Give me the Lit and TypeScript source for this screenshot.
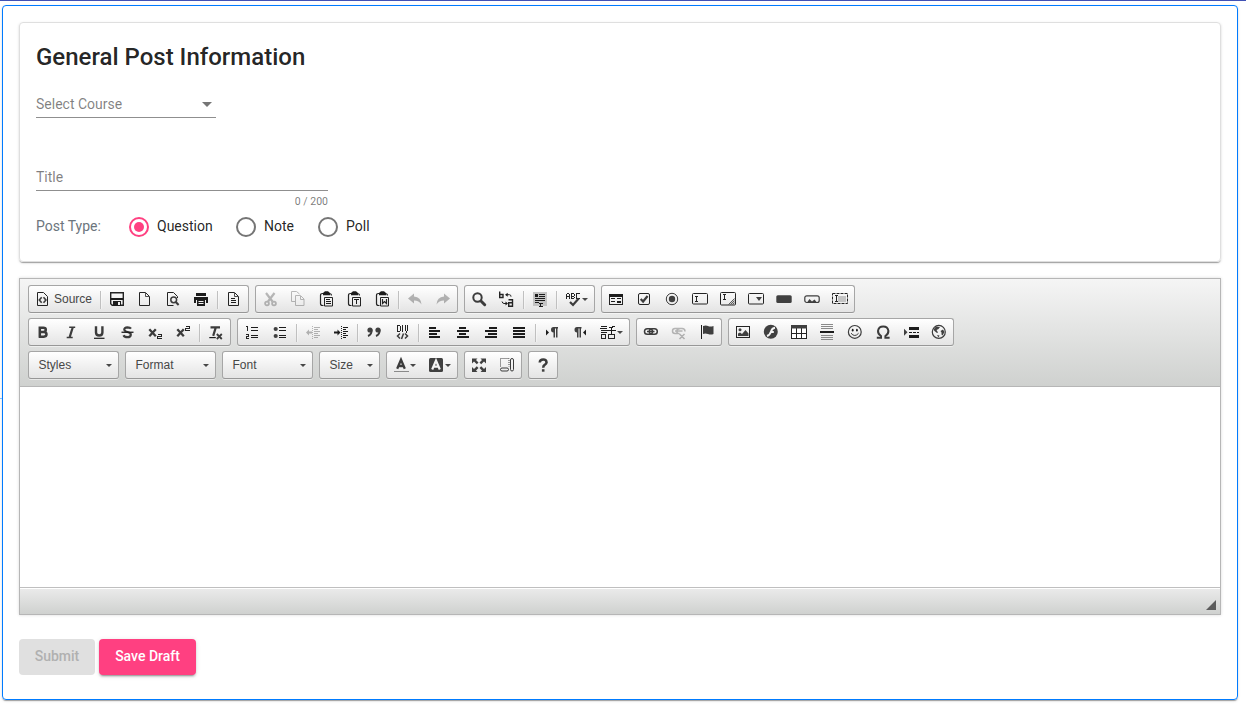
import { LitElement, html, css, svg, TemplateResult } from "lit";
import { customElement, property } from "lit/decorators.js";
import { classMap } from "lit/directives/class-map.js";

const page = svg`<path class="l" d="M2.5 1.5h6l4 4v9h-10z"/><path class="l thin" d="M8.5 2v3.5H12"/>`;
const clip = svg`<path class="l" stroke-width="1.200" d="M5.5 2.500h-1q-2 0-2 2v8q0 2 2 2h1M11 2.500q2.500 0 2.500 2"/><path d="M5 2l2-1.700h3L12 2v2.300H5z"/><path class="l" d="M6.500 6.500h8v8.500h-8z"/>`;
const lines = (rows: number[][]) => rows.map(([x, y, w, h]) => svg`<path class="px" d=${`M${x} ${y}h${w}v${h}h${-w}z`}/>`);

const ICONS: Record<string, unknown> = {
  source: svg`<path class="l" d="M2.500 1.500h6l4 4v9h-10z"/><path class="l mid" stroke-width="1.600" d="M6.700 6.300L4.300 9l2.400 2.700M8.500 6.300L10.900 9l-2.400 2.700"/>`,
  save: svg`<path class="l" stroke-width="1.400" d="M1.700 1.700h12.600v12.600H3.200l-1.500-1.500z"/><path d="M2 7h12v2H2zM4 10h8v5H4z"/><path class="lt" d="M9 11h2v3H9z"/>`,
  newpage: page,
  preview: svg`<path class="l" d="M12.500 7V5.500l-4-4h-6v13h6"/><circle class="l mid" stroke-width="1.500" cx="8.700" cy="8.800" r="2.900"/><path class="l mid" stroke-width="2" d="M10.800 11l2.800 3"/>`,
  print: svg`<path d="M3 2h10v3H3zM1 6h14v6h-2V9H3v3H1z"/><path d="M4 9h8v6H4z"/><path class="w" d="M5.500 10.500h5M5.500 12.500h5"/>`,
  templates: svg`${page}${lines([[5, 7, 4, 1], [5, 9, 5, 1], [5, 11, 5, 1]])}`,
  cut: svg`<path class="l" stroke-width="2.200" d="M4 2l6.500 8.500M12.500 2L6 10.500"/><circle class="l" stroke-width="1.800" cx="5" cy="12.500" r="1.900"/><circle class="l" stroke-width="1.800" cx="12" cy="12.500" r="1.900"/>`,
  copy: svg`<path class="l" d="M5 10.500H1.500v-10h5L9.500 3"/><path class="l" d="M5.500 4.500h5l3.500 3.500v6.500H5.500zM10.500 5v3.500H14"/>`,
  paste: svg`${clip}${lines([[8, 8, 4, 1], [8, 10, 5, 1], [8, 12, 5, 1]])}`,
  pastetext: svg`${clip}${lines([[8, 8, 5, 1], [10, 8, 1, 5]])}`,
  pasteword: svg`${clip}<path class="l" stroke-width="1.200" d="M8.500 8v4.500l2-2 2 2V8"/>`,
  undo: svg`<path d="M1 7.500L7 2.500v3q7 .5 7.500 8Q12 9.500 7 9.500v3z"/>`,
  redo: svg`<path d="M15 7.500L9 2.500v3Q2 6 1.500 13.500 4 9.500 9 9.500v3z"/>`,
  find: svg`<circle class="l mid" stroke-width="2" cx="6.500" cy="6.500" r="4.200"/><path class="l mid" stroke-width="3" stroke-linecap="round" d="M10.200 10.200l3.500 3.500"/>`,
  replace: svg`<path class="l" stroke-width="1.400" d="M.7.500v6h3.300v-3H1M9.500 8.700h4v6.600H9.700v-3.600h4"/><path class="l" d="M8 3.700h2.500q1.500 0 1.500 2M7 12.500H5q-1.500 0-2-2"/><path d="M6 3.700L8.700 1.700v4zM9 12.500l-2.500-2v4z"/>`,
  selectall: svg`<path class="pale" d="M1 1h14v14H1z"/>${lines([[3, 3, 3, 3], [7, 3, 6, 1], [7, 5, 6, 1], [3, 7, 10, 1], [3, 9, 10, 1], [3, 11, 4, 1], [7, 12, 4, 1], [8, 12, 1, 4], [7, 15, 4, 1]])}`,
  spell: svg`<path class="l px" d="M1.500 8V3.500l1-1h1l1 1V8M1.500 5.500h3M6.500 2v5.500h2l1-1-1-1h-2M6.500 2.500h2l1 1.500-1 1.500M14.500 2.500h-3v5h3"/><path class="l mid" stroke-width="2.200" d="M5 11l3 3 5.700-6.500"/>`,
  form: svg`<path class="l px" d="M1.500 3.500h13v10h-13z"/>${lines([[1, 3, 14, 3], [3, 7, 4, 1], [9, 7, 4, 1], [3, 10, 4, 1], [9, 10, 4, 2]])}`,
  checkbox: svg`<rect class="l" x="2.500" y="2.500" width="11" height="11" rx="1.500"/><path class="l mid" stroke-width="2.200" d="M4.700 8l2.400 2.500 4.500-5.500"/>`,
  radio: svg`<circle class="l mid" cx="8" cy="8" r="5.700"/><circle class="m" cx="8" cy="8" r="3.200"/>`,
  textfield: svg`<rect class="l" x=".5" y="2.500" width="15" height="10.500" rx="1"/><path class="l px" d="M3 5.500h3M4.500 5v6M3 10.500h3"/>`,
  textarea: svg`<rect class="l" x=".5" y="1.500" width="15" height="12.500" rx="1"/><path class="l px" d="M3 3.500h3M4.500 3v6M3 8.500h3"/><path class="l mid" d="M14.700 7.500l-6 6M14.700 9.500l-4 4M14.700 11.500l-2 2"/>`,
  select: svg`<rect class="l" x=".5" y="2.500" width="15" height="10.500" rx="1"/><path class="m" d="M8 6h6l-3 4z"/>`,
  button: svg`<rect class="m" x=".3" y="4.300" width="15.400" height="7.700" rx="1.500"/>`,
  imagebutton: svg`<rect class="l mid" stroke-width="1.200" x=".8" y="4.800" width="14.400" height="6.700" rx="2"/><path class="m" d="M3 11.500L5.500 8 8 10.500l2.500-2 2.500 3z"/>`,
  hidden: svg`<path class="pale" d="M6 5h8v6H6z"/><rect class="l" stroke-dasharray="3 1" x=".5" y="2.500" width="15" height="10"/><path class="l px" d="M3 4.500h3M4.500 4v7M3 10.500h3"/>`,
  bold: svg`<path class="l mid" stroke-width="2.500" d="M4.800 2.500v11.300M4 3.800h4.300q2.500 0 2.500 2t-2.500 2.200H4h4.800q2.700 0 2.700 2.300t-2.700 2.400H4"/>`,
  italic: svg`<path class="l mid" stroke-width="2.200" d="M9.700 3.500L6.700 13.200"/><path class="l mid" stroke-width="1.600" d="M6.200 3.200h6M3.700 13.500h6"/>`,
  underline: svg`<path class="l mid" stroke-width="2.400" d="M5 2.300v6.200q0 3 3.200 3t3.200-3V2.300"/><path d="M3 13.700h10.500v1.200H3z"/>`,
  strike: svg`<path class="l mid" stroke-width="2.200" d="M12 4.700Q11 3.300 8.500 3.300q-3.500.2-3.200 2.500Q6 7.500 8.500 8q3.500.8 3.300 2.800Q11.500 13.200 8.500 13.200T4.500 11.200"/><path d="M2.500 7.600h12v1.300h-12z"/>`,
  sub: svg`<path class="l mid" stroke-width="2.300" d="M2.300 5.200l6.500 7M8.800 5.200l-6.500 7"/><path class="l px" stroke-width="1" d="M10.500 10.500h4v2h-4v2H15"/>`,
  sup: svg`<path class="l mid" stroke-width="2.300" d="M2.300 5.200l6.500 7M8.800 5.200l-6.500 7"/><path class="l px" stroke-width="1" d="M10.500 2.500h4v2h-4v2H15"/>`,
  removeformat: svg`<path class="l mid" stroke-width="2.200" d="M2.500 3.400H12M7.800 3.400L5.200 11.800"/><path d="M1.300 13h6.500v1.200H1.300z"/><path class="l mid" stroke-width="1.800" d="M8.800 10l5 5M13.800 10l-5 5"/>`,
  numlist: svg`<path class="l px" d="M2 2.500h1.500V7M1.500 10.500H4.500v2H2.500v2H5"/>${lines([[7, 3, 7, 1], [7, 6, 7, 1], [7, 11, 7, 1], [7, 13, 7, 1]])}`,
  bullist: svg`<circle class="m" cx="3.700" cy="5" r="2.100"/><circle class="m" cx="3.700" cy="12" r="2.100"/>${lines([[7, 3, 7, 1], [7, 6, 7, 1], [7, 11, 7, 1], [7, 13, 7, 1]])}`,
  outdent: svg`<path d="M1 8.500l3-3v2h3v2H4v2z"/><path class="l" stroke-dasharray="1 1" d="M7.500 2v13"/>${lines([[9, 3, 6, 1], [9, 5, 4, 1], [9, 7, 6, 1], [9, 9, 4, 1], [9, 11, 6, 1], [9, 13, 4, 1]])}`,
  indent: svg`<path d="M7.500 8.500l-3-3v2H1v2h3.500v2z"/><path class="l" stroke-dasharray="1 1" d="M8.500 2v13"/>${lines([[10, 3, 5, 1], [10, 5, 3, 1], [10, 7, 5, 1], [10, 9, 3, 1], [10, 11, 5, 1], [10, 13, 3, 1]])}`,
  quote: svg`<circle class="m" cx="4" cy="6" r="2.600"/><circle class="m" cx="12" cy="6" r="2.600"/><path class="l mid" stroke-width="1.900" d="M5.600 5.500q.4 5-3.600 6.500M13.600 5.500q.4 5-3.600 6.500"/>`,
  div: svg`<path class="l px" d="M3.500 1v6.500h2l1-1v-4l-1-1h-2M8.500 1v7M11.500 1v5l1 2 1-2V1"/><path class="l mid" stroke-width="1.500" d="M6 9.500l-2.500 2.500L6 14.500M11 9.500l2.500 2.500L11 14.500M9.500 9.500l-2 5.500"/>`,
  left: svg`${lines([[2, 3, 7, 2], [2, 6, 11, 2], [2, 9, 8, 2], [2, 12, 11, 2]])}`,
  center: svg`${lines([[4, 3, 7, 2], [2, 6, 12, 2], [4, 9, 7, 2], [2, 12, 12, 2]])}`,
  right: svg`${lines([[6, 3, 8, 2], [2, 6, 12, 2], [5, 9, 9, 2], [2, 12, 12, 2]])}`,
  justify: svg`${lines([[2, 3, 12, 2], [2, 6, 12, 2], [2, 9, 12, 2], [2, 12, 12, 2]])}`,
  ltr: svg`<path d="M2 5.500l3 3-3 3z"/><path class="m" d="M14 3v1.500h-.5V13.500H12V4.500h-1v9H9.500V8.500Q7 8.500 7 5.800 7 3 9.500 3z"/>`,
  rtl: svg`<path d="M14 5.500l-3 3 3 3z"/><path class="m" d="M9.500 3v1.500H9V13.500H7.500V4.500h-1v9H5V8.500Q2.500 8.500 2.500 5.800 2.500 3 5 3z"/>`,
  language: svg`${lines([[1, 2, 6, 1], [0, 4, 7, 1], [1, 6, 6, 1], [1, 8, 6, 1], [7, 6, 9, 1], [9, 3, 4, 1], [12, 2, 3, 1], [11, 3, 1, 8]])}<path class="l px" d="M1.500 10.500h4v4h-4zM8.500 10.500h6v4h-6z"/>`,
  link: svg`<rect class="l mid" stroke-width="1.500" x="1.500" y="4.700" width="8" height="5.600" rx="2.800"/><rect class="l mid" stroke-width="1.500" x="6.300" y="4.700" width="8" height="5.600" rx="2.800"/><path class="l mid" stroke-width="1.500" d="M4 7.500h7.500"/>`,
  unlink: svg`<path class="l" stroke-width="1.500" d="M8.500 9.500H4Q1.500 9.500 1.500 7T4 4.500h3.500l1 1M7 9.500l-1-1V6L7.500 4.500H11q3 0 3 3M4 7h7.500M8.500 10l5 5M13.500 10l-5 5"/>`,
  anchor: svg`<path d="M2 1h1v14H2z"/><path class="m" d="M4 2q3-1 5 0t5.500 0v8q-2.500 1-5.500 0t-5 0z"/>`,
  image: svg`<rect class="l" x="1.500" y="2.500" width="13" height="11"/><circle class="m" cx="5" cy="5.700" r="1.500"/><path class="m" d="M3 12V9.500l2-1 2 1.500L10.500 6l3 3.500V12z"/>`,
  flash: svg`<circle class="m" cx="7.800" cy="7.800" r="7"/><path class="w" stroke-width="1.900" d="M12 3.700Q9 4 8 7.500T4 12M7.300 8h3.500"/>`,
  table: svg`<path class="white" d="M1 3h14v11H1z"/><path class="l px" d="M.5 3.500h15v11H.5zM5.500 4v11M10.500 4v11M0 9.500h16"/><path class="m" d="M0 1h16v3.500H0z"/>`,
  hr: svg`<path class="g" d="M2 0h12v1H2zM2 2h12v1H2zM2 4h12v1H2zM2 11h12v1H2zM2 13h12v1H2zM2 15h12v1H2z"/><path d="M1 7h14v2H1z"/>`,
  smiley: svg`<circle class="l mid" stroke-width="1.200" cx="7.800" cy="7.900" r="6.400"/><ellipse cx="5.700" cy="6.200" rx=".9" ry="1.400"/><ellipse cx="9.900" cy="6.200" rx=".9" ry="1.400"/><path class="l mid" d="M4 9.200q3.800 4.600 7.600 0"/>`,
  omega: svg`<path class="l mid" stroke-width="2" d="M1.800 13.700h4.200v-1.700Q2.800 10 3 6.800 3.700 2.500 8.200 2.500t5.200 4.300Q13.600 10 10.400 12v1.700h4.200"/>`,
  pagebreak: svg`<path class="m" d="M1 4.700L4.500 8.200 1 11.700z"/>${lines([[6, 3, 10, 3], [6, 8, 3, 1], [10, 8, 3, 1], [14, 8, 2, 1], [6, 11, 10, 3]])}`,
  iframe: svg`<circle class="l mid" stroke-width="1.200" cx="7.800" cy="7.900" r="6.500"/><path class="m" d="M2.500 5.500L5 2.500l4 .5-1.500 2-2 1L7 8.500l-1 .5-2.500-2zM9.500 7l2.500-1.500 1.500 2.500-2 3.500-1-1V8.500zM6 11l2.500.5-1 2z"/>`,
  color: svg`<path class="l mid" stroke-width="2.300" d="M4.200 11.800L8 2.700l3.800 9.100M5.500 9h5"/><path class="g" d="M1 13.500h14.500V15H1z"/>`,
  bgcolor: svg`<rect class="m" x="1" y="1" width="14" height="14" rx="1.500"/><path class="w" stroke-width="2.200" d="M4.200 12.500L8 3.500l3.800 9M5.500 9.700h5"/>`,
  maximize: svg`<path class="m" d="M1 1.500h5.500L5 3l2.500 2.500-1.700 1.700L3 4.500 1 6.500zM15 1.500H9.500L11 3 8.500 5.500l1.700 1.700L13 4.500l2 2zM1 15h5.500L5 13.500 7.500 11 5.800 9.300 3 12l-2-2zM15 15H9.500l1.500-1.500L8.500 11l1.700-1.700L13 12l2-2z"/>`,
  blocks: svg`<path class="l mid" stroke-dasharray="1 1" d="M1.500 9.500v-8H10v8"/><rect class="l mid" x="11.500" y="1.500" width="3" height="12.500" rx="1.500"/><rect class="l mid" x="1.500" y="11" width="8" height="3" rx="1.500"/>`,
  about: svg`<path class="l mid" stroke-width="2.500" d="M4.700 5.500Q5 2.500 8.200 2.500t3.300 2.700Q11.700 6.900 9.700 7.900 8.200 8.700 8.200 10.700"/><path class="m" d="M6.900 12.200h2.600v2.500H6.900z"/>`,
};

@customElement("tool-icon")
class ToolIcon extends LitElement {
  @property() name = "";
  static styles = css`
    :host { display: block; width: 16px; height: 16px; }
    svg { display: block; overflow: visible; fill: #1c1c1c; }
    .l { fill: none; stroke: #242424; }
    .mid { stroke: #3c3c3c; }
    .m { fill: #404040; }
    .w { fill: none; stroke: #f4f4f4; }
    .lt { fill: #eee; }
    .white { fill: #fff; }
    .pale { fill: #c4c4c4; }
    .g { fill: #8a8a8a; }
    .thin { stroke-width: 0.8; }
    .px, .g { shape-rendering: crispEdges; }
  `;
  render() {
    return html`<svg width="16" height="16" viewBox="0 0 16 16">${ICONS[this.name]}</svg>`;
  }
}

const DISABLED = new Set(["cut", "copy", "undo", "redo", "outdent", "unlink"]);
const MENUS = new Set(["spell", "language", "color", "bgcolor"]);

const ROWS: string[] = [
  "source | save newpage preview print | templates / cut copy paste pastetext pasteword | undo redo / find replace | selectall | spell / form checkbox radio textfield textarea select button imagebutton hidden",
  "bold italic underline strike sub sup | removeformat / numlist bullist | outdent indent | quote div | left center right justify | ltr rtl language / link unlink anchor / image flash table hr smiley omega pagebreak iframe",
  "color bgcolor / maximize blocks / about",
];

@customElement("rich-editor")
class RichEditor extends LitElement {
  static styles = css`
    :host { display: block; box-sizing: border-box; height: 337px; border: 1px solid #b6b6b6; box-shadow: 0 0 3px rgba(0, 0, 0, 0.15); font: 12px "Liberation Sans", Arial, sans-serif; color: #474747; }
    .frame { display: flex; flex-direction: column; height: 100%; }
    .bar { box-sizing: border-box; height: 108px; padding: 6px 8px 0; border-bottom: 1px solid #b6b6b6; background: linear-gradient(#f5f5f5, #cfd1cf); display: flex; flex-direction: column; gap: 5px; }
    .row { display: flex; gap: 6px; height: 28px; }
    .group { display: flex; box-sizing: border-box; height: 28px; border: 1px solid #a6a6a6; border-bottom-color: #979797; border-radius: 3px; background: linear-gradient(#fff, #e4e4e4); box-shadow: 0 1px 0 rgba(255, 255, 255, 0.5), inset 0 0 2px rgba(255, 255, 255, 0.15), inset 0 1px 0 rgba(255, 255, 255, 0.15); }
    .btn { display: flex; padding: 5px 6px; width: 16px; }
    .btn.menu { width: 23px; gap: 1px; }
    .btn.wide { width: 57px; gap: 3px; }
    .off tool-icon { opacity: 0.3; }
    .label { line-height: 17px; }
    .arrow { flex: none; width: 0; height: 0; border: 3px solid transparent; border-top-color: #474747; border-bottom: 0; margin-top: 7px; }
    .sep { width: 1px; height: 18px; margin: 5px 2px 0; background: #c0c0c0; box-shadow: 1px 0 1px rgba(255, 255, 255, 0.5); }
    .combo { width: 91px; padding: 0 6px 0 9.5px; justify-content: space-between; line-height: 26px; }
    .combo.small { width: 61px; }
    .combo .arrow { margin-top: 12px; }
    .area { flex: 1; background: #fff; }
    .foot { box-sizing: border-box; height: 27px; border-top: 1px solid #bfbfbf; box-shadow: inset 0 1px 0 #fff; background: linear-gradient(#ebebeb, #cfd1cf); display: flex; justify-content: flex-end; align-items: flex-end; padding: 0 4px 4px; }
    .grip { width: 10px; height: 10px; background: #5c5c5c; clip-path: polygon(100% 0, 100% 100%, 0 100%); }
  `;
  private item(name: string): TemplateResult {
    if (name === "|") return html`<span class="sep"></span>`;
    const menu = MENUS.has(name);
    const wide = name === "source";
    return html`<span class=${classMap({ btn: true, off: DISABLED.has(name), menu, wide })}><tool-icon name=${name}></tool-icon>${wide ? html`<span class="label">Source</span>` : ""}${menu ? html`<span class="arrow"></span>` : ""}</span>`;
  }
  render() {
    return html`<div class="frame">
      <div class="bar">
        ${ROWS.map((row, i) => html`<div class="row">
          ${i === 2 ? ["Styles", "Format", "Font", "Size"].map((t) => html`<div class=${classMap({ group: true, combo: true, small: t === "Size" })}><span>${t}</span><span class="arrow"></span></div>`) : ""}
          ${row.split(" / ").map((g) => html`<div class="group">${g.split(" ").map((n) => this.item(n))}</div>`)}
        </div>`)}
      </div>
      <div class="area"></div>
      <div class="foot"><span class="grip"></span></div>
    </div>`;
  }
}

@customElement("app-root")
class AppRoot extends LitElement {
  static styles = css`
    :host { display: block; position: relative; box-sizing: border-box; height: 712px; overflow: hidden; border-top: 1px solid #3f51b5; padding: 4px 8px 0 2px; background: #fff; font: 14px Roboto, sans-serif; color: rgba(0, 0, 0, 0.87); }
    .tick { position: absolute; left: 0; top: 397px; width: 2px; height: 1px; background: #80bdff; }
    .outer { box-sizing: border-box; height: 695px; border: 1px solid #007bff; border-radius: 4px; padding: 16px; box-shadow: 0 2px 1px -1px rgba(0, 0, 0, 0.2), 0 1px 1px rgba(0, 0, 0, 0.14), 0 1px 3px rgba(0, 0, 0, 0.12); }
    .card { box-sizing: border-box; height: 240px; margin-bottom: 16px; border: 1px solid #dfdfdf; border-radius: 4px; padding: 16px; box-shadow: 0 2px 1px -1px rgba(0, 0, 0, 0.2), 0 1px 1px rgba(0, 0, 0, 0.14), 0 1px 3px rgba(0, 0, 0, 0.12); }
    h1 { margin: 2px 0 0; font-size: 24px; line-height: 32px; font-weight: 500; }
    .field { box-sizing: border-box; border-bottom: 1px solid #8f8f8f; color: rgba(0, 0, 0, 0.5); line-height: 16px; height: 24px; display: flex; justify-content: space-between; }
    .course { width: 180px; margin-top: 21px; padding: 2px 4px 0 0; }
    .caret { width: 0; height: 0; border: 5px solid transparent; border-top-color: #757575; border-bottom: 0; margin-top: 6px; }
    .title { width: 292px; margin-top: 49px; padding-top: 2px; }
    .count { width: 292px; margin-top: 4px; text-align: right; font-size: 10.5px; line-height: 13px; color: rgba(0, 0, 0, 0.54); }
    .types { display: flex; gap: 24px; height: 20px; line-height: 18px; margin-top: 9px; }
    .types .name { width: 69px; color: #6c757d; }
    .radio { display: flex; gap: 8px; width: 83px; }
    .radio.short { width: 58px; }
    .dot { box-sizing: border-box; flex: none; width: 20px; height: 20px; border: 2px solid #757575; border-radius: 50%; display: grid; place-items: center; }
    .dot.on { border-color: #ff4081; }
    .dot.on::after { content: ""; width: 10px; height: 10px; border-radius: 50%; background: #ff4081; }
    .actions { display: flex; gap: 4px; margin-top: 24px; }
    .action { box-sizing: border-box; width: 76px; text-align: center; font-weight: 500; line-height: 34px; padding-bottom: 2px; border-radius: 4px; background: #e0e0e0; color: #b0b0b0; }
    .action.main { width: 97px; background: #ff4081; color: #fff; box-shadow: 0 3px 1px -2px rgba(0, 0, 0, 0.2), 0 2px 2px rgba(0, 0, 0, 0.14), 0 1px 5px rgba(0, 0, 0, 0.12); }
  `;
  render() {
    return html`<span class="tick"></span><div class="outer">
      <div class="card">
        <h1>General Post Information</h1>
        <div class="field course"><span>Select Course</span><span class="caret"></span></div>
        <div class="field title"><span>Title</span></div>
        <div class="count">0 / 200</div>
        <div class="types"><span class="name">Post Type:</span>
          ${["Question", "Note", "Poll"].map((t, i) => html`<span class=${classMap({ radio: true, short: i > 0 })}><span class=${classMap({ dot: true, on: i === 0 })}></span><span>${t}</span></span>`)}
        </div>
      </div>
      <rich-editor></rich-editor>
      <div class="actions"><span class="action">Submit</span><span class="action main">Save Draft</span></div>
    </div>`;
  }
}
